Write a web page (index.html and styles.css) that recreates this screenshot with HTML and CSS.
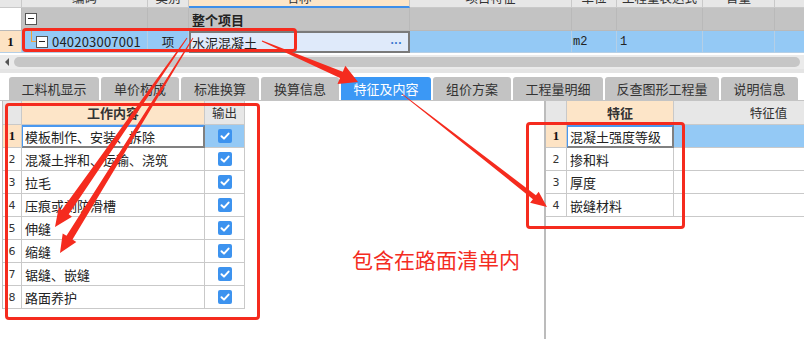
FILE: index.html
```html
<!DOCTYPE html>
<html lang="zh-CN">
<head>
    <meta charset="UTF-8">
    <title>特征及内容</title>
    <link rel="stylesheet" href="styles.css">
</head>
<body>
    <div class="top">
        <div class="trow head">
            <div class="cell num"></div>
            <div class="cell">编码</div>
            <div class="cell">类别</div>
            <div class="cell name-head">名称</div>
            <div class="cell">项目特征</div>
            <div class="cell">单位</div>
            <div class="cell">工程量表达式</div>
            <div class="cell">含量</div>
            <div class="cell">取费专业</div>
        </div>
        <div class="trow group">
            <div class="cell num"></div>
            <div class="cell code"><span class="fold"></span></div>
            <div class="cell"></div>
            <div class="cell title">整个项目</div>
            <div class="cell"></div>
            <div class="cell"></div>
            <div class="cell"></div>
            <div class="cell"></div>
            <div class="cell"></div>
        </div>
        <div class="trow item">
            <div class="cell num sel">1</div>
            <div class="cell code"><span class="branch"></span><span class="fold"></span><span class="code-text">040203007001</span></div>
            <div class="cell center">项</div>
            <div class="cell editor">水泥混凝土<span class="more">...</span></div>
            <div class="cell"></div>
            <div class="cell unit">m2</div>
            <div class="cell qty">1</div>
            <div class="cell"></div>
            <div class="cell"></div>
        </div>
    </div>

    <div class="hscroll">
        <span class="arrow-left"></span>
        <span class="thumb"></span>
    </div>

    <div class="tabs">
        <div class="tab w90">工料机显示</div>
        <div class="tab">单价构成</div>
        <div class="tab">标准换算</div>
        <div class="tab">换算信息</div>
        <div class="tab w90 active">特征及内容</div>
        <div class="tab">组价方案</div>
        <div class="tab w90">工程量明细</div>
        <div class="tab w114">反查图形工程量</div>
        <div class="tab w77">说明信息</div>
    </div>

    <div class="panes">
        <div class="pane left">
            <div class="work">
                <div class="wrow whead">
                    <div class="cell"></div>
                    <div class="cell bold peach">工作内容</div>
                    <div class="cell center">输出</div>
                </div>
                <div class="wrow current">
                    <div class="cell num sel">1</div>
                    <div class="cell text edit">模板制作、安装、拆除</div>
                    <div class="cell center out"><svg class="check" viewBox="0 0 14 14"><rect width="14" height="14" rx="2"/><path d="M3.5 7.2 L6 9.6 L10.6 4.6"/></svg></div>
                </div>
                <div class="wrow">
                    <div class="cell num">2</div>
                    <div class="cell text">混凝土拌和、运输、浇筑</div>
                    <div class="cell center"><svg class="check" viewBox="0 0 14 14"><rect width="14" height="14" rx="2"/><path d="M3.5 7.2 L6 9.6 L10.6 4.6"/></svg></div>
                </div>
                <div class="wrow">
                    <div class="cell num">3</div>
                    <div class="cell text">拉毛</div>
                    <div class="cell center"><svg class="check" viewBox="0 0 14 14"><rect width="14" height="14" rx="2"/><path d="M3.5 7.2 L6 9.6 L10.6 4.6"/></svg></div>
                </div>
                <div class="wrow">
                    <div class="cell num">4</div>
                    <div class="cell text">压痕或刻防滑槽</div>
                    <div class="cell center"><svg class="check" viewBox="0 0 14 14"><rect width="14" height="14" rx="2"/><path d="M3.5 7.2 L6 9.6 L10.6 4.6"/></svg></div>
                </div>
                <div class="wrow">
                    <div class="cell num">5</div>
                    <div class="cell text">伸缝</div>
                    <div class="cell center"><svg class="check" viewBox="0 0 14 14"><rect width="14" height="14" rx="2"/><path d="M3.5 7.2 L6 9.6 L10.6 4.6"/></svg></div>
                </div>
                <div class="wrow">
                    <div class="cell num">6</div>
                    <div class="cell text">缩缝</div>
                    <div class="cell center"><svg class="check" viewBox="0 0 14 14"><rect width="14" height="14" rx="2"/><path d="M3.5 7.2 L6 9.6 L10.6 4.6"/></svg></div>
                </div>
                <div class="wrow">
                    <div class="cell num">7</div>
                    <div class="cell text">锯缝、嵌缝</div>
                    <div class="cell center"><svg class="check" viewBox="0 0 14 14"><rect width="14" height="14" rx="2"/><path d="M3.5 7.2 L6 9.6 L10.6 4.6"/></svg></div>
                </div>
                <div class="wrow">
                    <div class="cell num">8</div>
                    <div class="cell text">路面养护</div>
                    <div class="cell center"><svg class="check" viewBox="0 0 14 14"><rect width="14" height="14" rx="2"/><path d="M3.5 7.2 L6 9.6 L10.6 4.6"/></svg></div>
                </div>
            </div>
        </div>

        <div class="pane right">
            <div class="feat">
                <div class="frow fhead">
                    <div class="cell"></div>
                    <div class="cell bold peach">特征</div>
                    <div class="cell center">特征值</div>
                </div>
                <div class="frow current">
                    <div class="cell num sel">1</div>
                    <div class="cell text edit">混凝土强度等级</div>
                    <div class="cell out"></div>
                </div>
                <div class="frow">
                    <div class="cell num">2</div>
                    <div class="cell text">掺和料</div>
                    <div class="cell"></div>
                </div>
                <div class="frow">
                    <div class="cell num">3</div>
                    <div class="cell text">厚度</div>
                    <div class="cell"></div>
                </div>
                <div class="frow">
                    <div class="cell num">4</div>
                    <div class="cell text">嵌缝材料</div>
                    <div class="cell"></div>
                </div>
            </div>
        </div>
    </div>

    <!-- red markup drawn over the screenshot -->
    <div class="marks">
        <div class="box box-name"></div>
        <div class="box box-work"></div>
        <div class="box box-feat"></div>
        <div class="note">包含在路面清单内</div>
        <svg class="arrows" width="804" height="339" viewBox="0 0 804 339">
            <polygon points="187.4,38.3 68.7,214.3 72.0,216.8 55,227 58.7,207.6 61.8,210.1 186.6,37.7"/>
            <polygon points="193.4,38.3 72.5,239.6 76.3,241.9 60,253 62.7,233.5 66.5,235.8 192.6,37.7"/>
            <polygon points="261.8,41.5 340.0,78.1 337.5,84.1 358,82 345.3,65.7 342.8,71.7 262.2,40.5"/>
            <polygon points="401.8,94.2 532.9,199.2 530.1,202.7 547,207 538.7,191.7 535.9,195.2 402.2,93.8"/>
        </svg>
    </div>
</body>
</html>
```

FILE: styles.css
```css
* {
    box-sizing: border-box;
}
body {
    margin: 0;
    width: 804px;
    height: 339px;
    overflow: hidden;
    position: relative;
    background: #fff;
    font-family: "Noto Sans CJK SC", sans-serif;
    font-size: 12.5px;
    color: #222;
}
.cell {
    display: flex;
    align-items: center;
    overflow: hidden;
    white-space: nowrap;
    border-right: 1px solid #c9c9c9;
    border-bottom: 1px solid #c9c9c9;
}
.center {
    justify-content: center;
}
.bold {
    font-weight: bold;
    font-size: 13px;
    justify-content: center;
}
.peach {
    background: #fde5c8;
}
.num {
    justify-content: center;
    font-family: "DejaVu Sans", sans-serif;
    font-size: 11px;
    color: #333;
}
.num.sel {
    background: #fde3c4;
    font-family: "Liberation Serif", serif;
    font-weight: bold;
    font-size: 13px;
    color: #111;
}

/* upper bill grid */
.top {
    overflow: hidden;
}
.trow {
    display: grid;
    grid-template-columns: 22px 126px 41px 221px 162px 45px 86px 72px 120px;
}
.trow.head {
    height: 20px;
    margin-top: -12px;
    background: #e7e7e7;
    color: #333;
}
.trow.head .cell {
    justify-content: center;
}
.trow.head .name-head {
    background: #fde6c9;
    border-bottom: 2px solid #3f8fea;
}
.trow.group {
    height: 23px;
    background: #c3c3c3;
}
.trow.group .cell {
    border-color: #b9b9b9;
}
.trow.group .num {
    background: #fff;
}
.trow.group .title {
    padding-left: 3px;
    font-weight: bold;
    font-size: 13px;
    color: #222;
}
.trow.item {
    height: 22px;
    background: #94c9f5;
}
.trow.item .cell {
    border-color: #b5cfe6;
}
.code {
    padding-left: 3px;
}
.fold {
    position: relative;
    width: 12px;
    height: 12px;
    flex: none;
    background: #fff;
    border: 1px solid #555;
}
.fold::before {
    content: "";
    position: absolute;
    left: 2px;
    right: 2px;
    top: 4px;
    height: 1px;
    background: #222;
}
.branch {
    align-self: flex-start;
    width: 5px;
    height: 11px;
    margin-left: 6px;
    flex: none;
    border-left: 1px solid #f0a53c;
    border-bottom: 1px solid #f0a53c;
}
.code-text {
    margin-left: 4px;
    font-size: 13px;
    letter-spacing: 0.2px;
}
.trow.item .editor {
    background: #dfeafa;
    border: 2px solid #7a7a7a;
    padding: 0 6px 0 1px;
    justify-content: space-between;
    font-size: 13px;
}
.more {
    color: #3b78d0;
    font-family: "Liberation Sans", sans-serif;
    font-weight: bold;
    font-size: 12px;
    letter-spacing: 0.5px;
    margin-top: -4px;
}
.unit {
    padding-left: 1px;
    font-family: "Liberation Mono", monospace;
    font-size: 12px;
}
.qty {
    padding-left: 3px;
    font-family: "Liberation Mono", monospace;
    font-size: 12px;
}

/* horizontal scroll bar */
.hscroll {
    height: 18px;
    margin-top: 2px;
    padding: 2px 4px 2px 5px;
    display: flex;
    align-items: center;
    gap: 5px;
    background: #ebebeb;
    border-bottom: 4px solid #e4e4e4;
}
.arrow-left {
    width: 0;
    height: 0;
    border-top: 4px solid transparent;
    border-bottom: 4px solid transparent;
    border-right: 4px solid #555;
}
.thumb {
    flex: 1;
    height: 10px;
    border-radius: 5px;
    background: #c6c6c6;
}

/* tab strip */
.tabs {
    display: flex;
    gap: 2px;
    margin-top: 4px;
    padding-left: 9px;
    border-bottom: 1px solid #c4c4c4;
}
.tab {
    width: 78px;
    height: 23px;
    display: flex;
    align-items: center;
    justify-content: center;
    background: #c3c3c3;
    border-radius: 3px 3px 0 0;
    font-size: 13px;
    color: #333;
}
.tab.w90 {
    width: 90px;
}
.tab.w114 {
    width: 114px;
}
.tab.w77 {
    width: 77px;
}
.tab.active {
    background: #3b98f5;
    color: #fff;
}

/* lower panes */
.panes {
    display: flex;
    height: 238px;
}
.pane.left {
    width: 544px;
    padding-left: 2px;
}
.pane.right {
    flex: 1;
    overflow: hidden;
    border-left: 2px solid #bcbcbc;
}
.wrow,
.frow {
    display: grid;
    height: 23px;
}
.wrow {
    grid-template-columns: 19px 183px 40px;
}
.frow {
    grid-template-columns: 21px 107px 190px;
}
.work {
    width: 243px;
    border-left: 1px solid #c0c0c0;
}
.wrow.whead,
.frow.fhead {
    height: 24px;
    background: #e7e7e7;
    color: #333;
}
.text {
    padding-left: 3px;
    font-size: 13px;
}
.current .edit {
    background: #fff;
    border-top: 2px solid #4a98ef;
    border-left: 1px solid #4a98ef;
    border-right: 2px solid #808080;
    border-bottom: 2px solid #808080;
    padding-left: 2px;
}
.current .out {
    background: #94c9f5;
}
.check {
    width: 14px;
    height: 14px;
}
.check rect {
    fill: #3d93ef;
}
.check path {
    fill: none;
    stroke: #fff;
    stroke-width: 2;
    stroke-linecap: round;
    stroke-linejoin: round;
}

/* markup layer */
.marks {
    position: absolute;
    inset: 0;
    pointer-events: none;
}
.box {
    position: absolute;
    border: 3px solid #f52b1e;
    border-radius: 4px;
}
.box-name {
    left: 22px;
    top: 28px;
    width: 275px;
    height: 24px;
}
.box-work {
    left: 5px;
    top: 103px;
    width: 255px;
    height: 217px;
}
.box-feat {
    left: 526px;
    top: 122px;
    width: 159px;
    height: 107px;
}
.note {
    position: absolute;
    left: 352px;
    top: 245px;
    font-size: 21px;
    line-height: 28px;
    color: #f42c1f;
}
.arrows {
    position: absolute;
    left: 0;
    top: 0;
}
.arrows polygon {
    fill: #f52b1e;
}
```
